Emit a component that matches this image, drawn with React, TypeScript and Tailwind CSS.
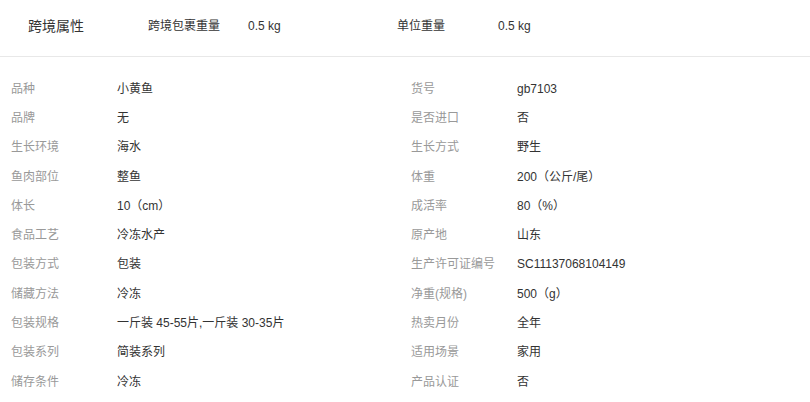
const HEADER_ITEMS = [
  { label: '跨境包裹重量', value: '0.5 kg', labelWidth: 'w-[100px]' },
  { label: '单位重量', value: '0.5 kg', labelWidth: 'w-[101px]' },
];

const ATTRS: [string, string][] = [
  ['品种', '小黄鱼'],
  ['货号', 'gb7103'],
  ['品牌', '无'],
  ['是否进口', '否'],
  ['生长环境', '海水'],
  ['生长方式', '野生'],
  ['鱼肉部位', '整鱼'],
  ['体重', '200（公斤/尾）'],
  ['体长', '10（cm）'],
  ['成活率', '80（%）'],
  ['食品工艺', '冷冻水产'],
  ['原产地', '山东'],
  ['包装方式', '包装'],
  ['生产许可证编号', 'SC11137068104149'],
  ['储藏方法', '冷冻'],
  ['净重(规格)', '500（g）'],
  ['包装规格', '一斤装 45-55片,一斤装 30-35片'],
  ['热卖月份', '全年'],
  ['包装系列', '简装系列'],
  ['适用场景', '家用'],
  ['储存条件', '冷冻'],
  ['产品认证', '否'],
];

export default function App() {
  return (
    <div
      className="w-[810px] h-[402px] overflow-hidden bg-white text-[#333]"
      style={{ fontFamily: '"Liberation Sans", Arial, "Noto Sans CJK SC", sans-serif' }}
    >
      <div className="border-b border-[#e8e8e8] pb-[4px]">
        <div className="flex h-[52px] items-center pl-[28px]">
          <div className="w-[120px] text-[14px]">跨境属性</div>
          {HEADER_ITEMS.map((item) => (
            <div key={item.label} className="flex w-[249px] text-[12px]">
              <span className={item.labelWidth}>{item.label}</span>
              <span>{item.value}</span>
            </div>
          ))}
        </div>
      </div>

      <div className="grid grid-cols-[400px_400px] pl-[11px] pt-[17px]">
        {ATTRS.map(([label, value]) => (
          <div key={label} className="flex h-[29.3px] items-center text-[12px]">
            <span className="w-[106px] text-[#999]">{label}</span>
            <span>{value}</span>
          </div>
        ))}
      </div>
    </div>
  );
}
